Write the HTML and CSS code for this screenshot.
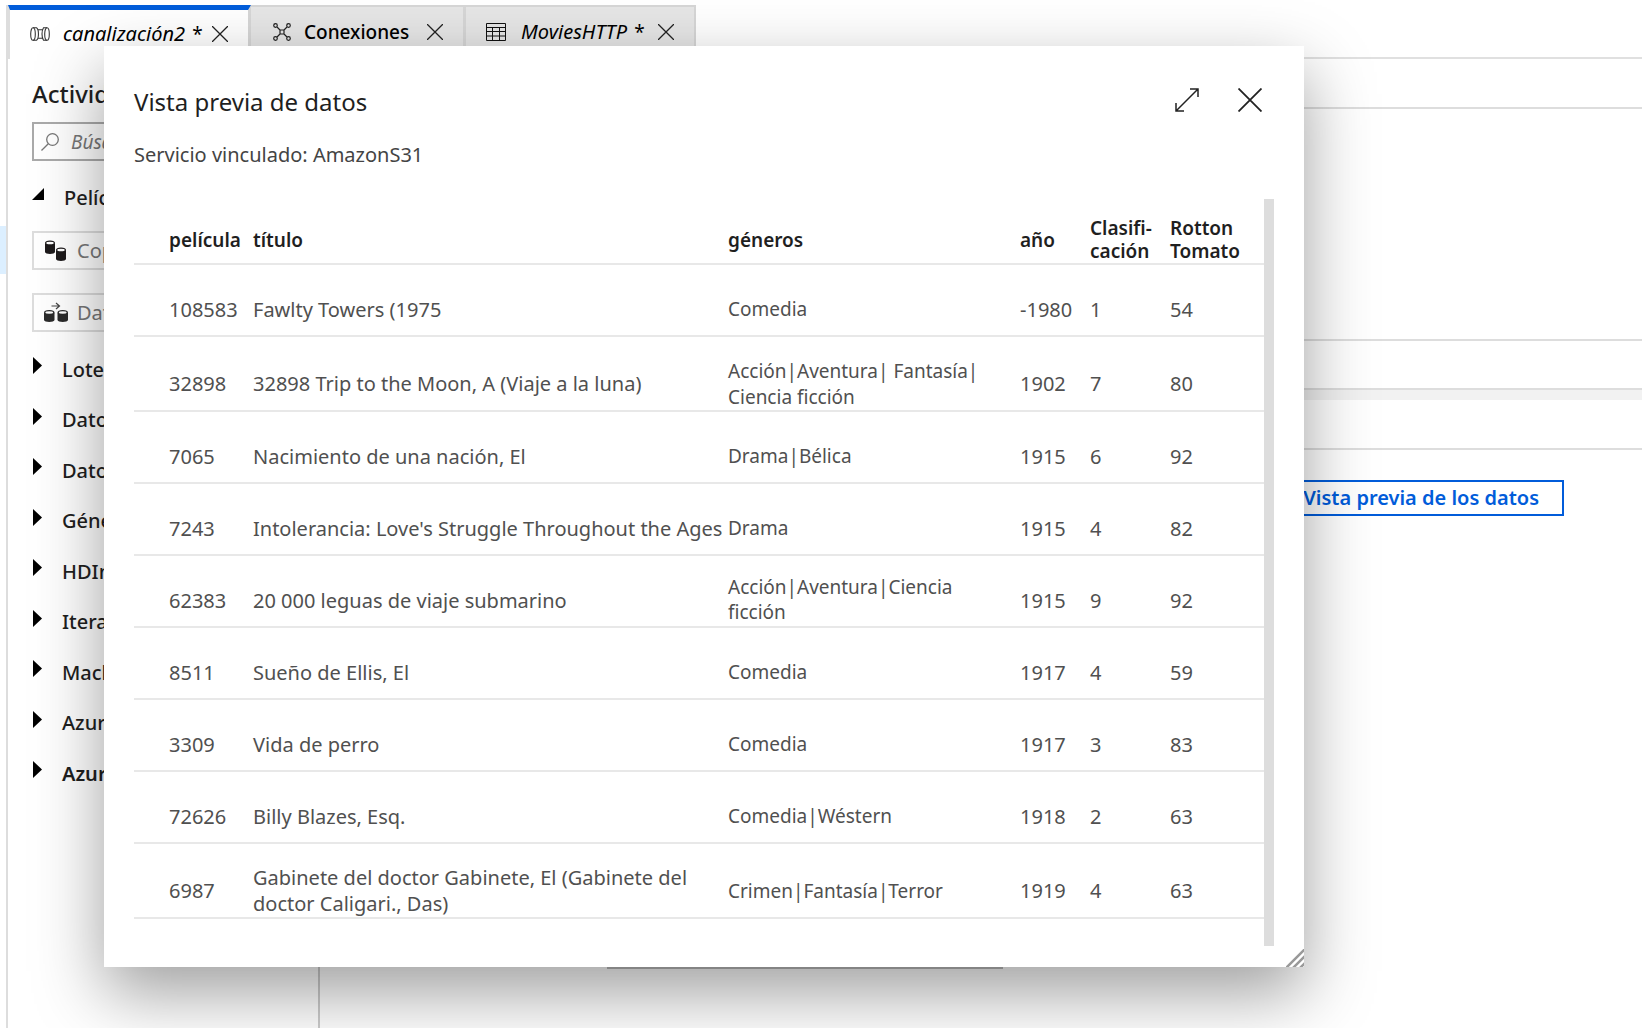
FILE: index.html
```html
<!DOCTYPE html>
<html lang="es">
<head>
<meta charset="utf-8">
<title>Vista previa de datos</title>
<link rel="stylesheet" href="styles.css">
</head>
<body>
<div class="app">
  <nav class="rail"><a class="rail-item" href="#" aria-label="Autor"></a></nav>
  <div class="workspace">
    <div class="tabs">
      <div class="tab tab-active">
        <svg class="tab-icon" viewBox="0 0 20 14" fill="none" stroke="#333" stroke-width="1.1"><ellipse cx="3" cy="7" rx="2.3" ry="6.3"/><path d="M3 .7h3.500c2.600 1.500 2.600 11.100 0 12.600H3M8 2.800h5M8 11.200h5M17 .7h-3.500c-2 3-2 9.600 0 12.600H17"/><ellipse cx="17" cy="7" rx="2.300" ry="6.300"/></svg>
        <span class="tab-name">canalización2 <span class="star">*</span></span>
        <button class="tab-close" aria-label="Cerrar"><svg viewBox="0 0 16 16"><path d="M0 0 16 16M16 0 0 16"/></svg></button>
      </div>
      <div class="tab">
        <svg class="tab-icon tab-icon-links" viewBox="0 0 18 18" fill="none" stroke="#222" stroke-width="1.200"><path d="M4 4l3.500 3.500M14 4l-3.500 3.500M4 14l3.500-3.500M14 14l-3.500-3.500M7 7h4v4H7z"/><circle cx="2.500" cy="2.500" r="1.800"/><circle cx="15.500" cy="2.500" r="1.800"/><circle cx="2.500" cy="15.500" r="1.800"/><circle cx="15.500" cy="15.500" r="1.800"/></svg>
        <span class="tab-name tab-plain">Conexiones</span>
        <button class="tab-close" aria-label="Cerrar"><svg viewBox="0 0 16 16"><path d="M0 0 16 16M16 0 0 16"/></svg></button>
      </div>
      <div class="tab">
        <svg class="tab-icon tab-icon-table" viewBox="0 0 20 18" fill="none" stroke="#111" stroke-width="1"><path d="M.5.5h19v17H.5zM.5 4.500h19M.5 8.500h19M.5 13h19M6.500 4.500v13M13.500 4.500v13"/></svg>
        <span class="tab-name">MoviesHTTP <span class="star">*</span></span>
        <button class="tab-close" aria-label="Cerrar"><svg viewBox="0 0 16 16"><path d="M0 0 16 16M16 0 0 16"/></svg></button>
      </div>
    </div>
    <div class="columns">
      <aside class="sidebar">
        <h2 class="side-title">Activid</h2>
        <label class="search">
          <svg viewBox="0 0 18 18" fill="none" stroke="#777" stroke-width="1.300"><circle cx="11.500" cy="6.500" r="5.800"/><path d="M7.300 10.700.5 17.500"/></svg>
          <input type="search" placeholder="Búsqueda" aria-label="Búsqueda">
        </label>
        <button class="group group-open"><svg class="caret" viewBox="0 0 12 12"><path d="M12 0v12H0z"/></svg>Películas</button>
        <div class="cards">
          <button class="card">
            <svg viewBox="0 0 24 22"><path fill="#1d1a1b" d="M1 3.500v8.500c0 2.500 10 2.500 10 0V3.500zM12 10.500v8.500c0 2.500 10 2.500 10 0v-8.500z"/><ellipse cx="6" cy="3" rx="5" ry="2.500" fill="#1d1a1b"/><ellipse cx="6" cy="3" rx="3.800" ry="1.300" fill="#fff"/><ellipse cx="17" cy="10" rx="5" ry="2.500" fill="#1d1a1b"/><ellipse cx="17" cy="10" rx="3.800" ry="1.300" fill="#fff"/></svg>
            Copiar
          </button>
          <button class="card">
            <svg viewBox="0 0 24 22"><path fill="#2b2b2b" d="M0 11v7c0 2.500 10.500 2.500 10.500 0v-7zM13.500 11v7c0 2.500 10.500 2.500 10.500 0v-7z"/><ellipse cx="5.250" cy="10.500" rx="5.250" ry="2.500" fill="#2b2b2b"/><ellipse cx="5.250" cy="10.500" rx="3.900" ry="1.200" fill="#fff"/><ellipse cx="18.750" cy="10.500" rx="5.250" ry="2.500" fill="#2b2b2b"/><ellipse cx="18.750" cy="10.500" rx="3.900" ry="1.200" fill="#fff"/><path d="M7.500 4h7.500M12 1l3.500 3L12 7" fill="none" stroke="#444" stroke-width="1.200"/></svg>
            Datos
          </button>
        </div>
        <div class="groups">
          <button class="group"><svg class="caret" viewBox="0 0 9 17"><path d="M0 0l9 8.500L0 17z"/></svg>Lote</button>
          <button class="group"><svg class="caret" viewBox="0 0 9 17"><path d="M0 0l9 8.500L0 17z"/></svg>Datos</button>
          <button class="group"><svg class="caret" viewBox="0 0 9 17"><path d="M0 0l9 8.500L0 17z"/></svg>Datos</button>
          <button class="group"><svg class="caret" viewBox="0 0 9 17"><path d="M0 0l9 8.500L0 17z"/></svg>Género</button>
          <button class="group"><svg class="caret" viewBox="0 0 9 17"><path d="M0 0l9 8.500L0 17z"/></svg>HDInsight</button>
          <button class="group"><svg class="caret" viewBox="0 0 9 17"><path d="M0 0l9 8.500L0 17z"/></svg>Iteración</button>
          <button class="group"><svg class="caret" viewBox="0 0 9 17"><path d="M0 0l9 8.500L0 17z"/></svg>Machine</button>
          <button class="group"><svg class="caret" viewBox="0 0 9 17"><path d="M0 0l9 8.500L0 17z"/></svg>Azure</button>
          <button class="group group-strong"><svg class="caret" viewBox="0 0 9 17"><path d="M0 0l9 8.500L0 17z"/></svg>Azure</button>
        </div>
      </aside>
      <main class="editor">
        <div class="toolbar"></div>
        <div class="canvas"></div>
        <div class="strip"></div>
        <div class="splitter"></div>
        <div class="strip strip-tabs"></div>
        <div class="settings">
          <button class="preview">Vista previa de los datos</button>
          <div class="field-edge"></div>
        </div>
      </main>
    </div>
  </div>
</div>

<div class="overlay">
  <section class="dialog" role="dialog" aria-labelledby="dialog-title">
    <header class="dialog-head">
      <h1 id="dialog-title">Vista previa de datos</h1>
      <button class="dialog-btn" aria-label="Expandir"><svg viewBox="0 0 24 24" stroke-width="1.500"><path d="M1 23 23 1M15 1h8v8M1 15v8h8"/></svg></button>
      <button class="dialog-btn" aria-label="Cerrar"><svg viewBox="0 0 24 24" stroke-width="1.800"><path d="M.5.5l23 23M23.500.5l-23 23"/></svg></button>
    </header>
    <p class="service">Servicio vinculado: AmazonS31</p>
    <div class="scroll">
      <table class="data">
        <colgroup><col class="c-pad"><col class="c-id"><col class="c-title"><col class="c-genre"><col class="c-year"><col class="c-rank"><col class="c-rotton"></colgroup>
        <thead>
          <tr><td></td><th>película</th><th>título</th><th>géneros</th><th>año</th><th>Clasifi-<br>cación</th><th>Rotton<br>Tomato</th></tr>
        </thead>
        <tbody>
          <tr><td></td><td>108583</td><td>Fawlty Towers (1975</td><td>Comedia</td><td>-1980</td><td>1</td><td>54</td></tr>
          <tr class="tall"><td></td><td>32898</td><td>32898 Trip to the Moon, A (Viaje a la luna)</td><td>Acción|Aventura| Fantasía|<br>Ciencia ficción</td><td>1902</td><td>7</td><td>80</td></tr>
          <tr><td></td><td>7065</td><td>Nacimiento de una nación, El</td><td>Drama|Bélica</td><td>1915</td><td>6</td><td>92</td></tr>
          <tr><td></td><td>7243</td><td>Intolerancia: Love's Struggle Throughout the Ages</td><td>Drama</td><td>1915</td><td>4</td><td>82</td></tr>
          <tr><td></td><td>62383</td><td>20 000 leguas de viaje submarino</td><td>Acción|Aventura|Ciencia<br>ficción</td><td>1915</td><td>9</td><td>92</td></tr>
          <tr><td></td><td>8511</td><td>Sueño de Ellis, El</td><td>Comedia</td><td>1917</td><td>4</td><td>59</td></tr>
          <tr><td></td><td>3309</td><td>Vida de perro</td><td>Comedia</td><td>1917</td><td>3</td><td>83</td></tr>
          <tr><td></td><td>72626</td><td>Billy Blazes, Esq.</td><td>Comedia|Wéstern</td><td>1918</td><td>2</td><td>63</td></tr>
          <tr class="tall"><td></td><td>6987</td><td>Gabinete del doctor Gabinete, El (Gabinete del<br>doctor Caligari., Das)</td><td>Crimen|Fantasía|Terror</td><td>1919</td><td>4</td><td>63</td></tr>
        </tbody>
      </table>
      <div class="scrollbar"></div>
    </div>
    <svg class="grip" viewBox="0 0 18 18" stroke="#999" stroke-width="2.500"><path d="M0 19 19 0M7 19 19 7M14 19l5-5"/></svg>
  </section>
</div>
</body>
</html>
```
FILE: styles.css
```css
* { box-sizing: border-box; }

body {
  margin: 0;
  font: 19px/26px "Noto Sans", "Open Sans", sans-serif;
  color: #1f1f1f;
  background: #fff;
}

button {
  margin: 0;
  padding: 0;
  border: 0;
  background: none;
  font: inherit;
  color: inherit;
  text-align: left;
}

svg { display: block; flex: none; }

.app { display: flex; height: 100vh; overflow: hidden; }

.rail { width: 6px; flex: none; padding-top: 226px; }
.rail-item { display: block; height: 48px; background: #dcefff; }

.workspace {
  flex: 1;
  display: flex;
  flex-direction: column;
  margin-top: 5px;
  border-left: 2px solid #ddd;
}

/* Tabs */
.tabs { display: flex; height: 54px; border-bottom: 2px solid #e0e0e0; }
.tab {
  display: flex;
  align-items: center;
  width: 215px;
  height: 54px;
  padding: 0 20px 2px 22px;
  border-top: 2px solid #d6d6d6;
  border-right: 3px solid #d6d6d6;
  background: #e6e6e6;
  color: #000;
}
.tab:last-child { width: 230px; border-right-width: 2px; padding-left: 20px; }
.tab-active {
  width: 243px;
  padding: 0 20px 2px 20px;
  border-top: 5px solid #015cda;
  border-left: 2px solid #ddd;
  background: #fff;
}
.tab-icon { width: 20px; height: 14px; margin-right: 13px; }
.tab-icon-links { width: 18px; height: 18px; }
.tab-icon-table { height: 18px; margin-right: 15px; }
.tab-name { flex: 1; font-size: 20px; font-style: italic; white-space: nowrap; }
.tab-plain { font-size: 19px; font-style: normal; font-weight: 500; }
.star { margin-left: 2px; font-size: 19px; font-style: normal; }
.tab-close svg { width: 16px; height: 16px; stroke: #222; stroke-width: 1.3; }

/* Activities panel */
.columns { flex: 1; display: flex; min-height: 0; }
.sidebar {
  width: 312px;
  flex: none;
  padding: 19px 24px 0;
  border-right: 2px solid #ccc;
}
.side-title { margin: 0 0 12px; font-size: 24px; line-height: 32px; font-weight: 500; }
.search {
  display: flex;
  align-items: center;
  gap: 12px;
  height: 39px;
  padding-left: 7px;
  border: 2px solid #aaa;
}
.search svg { width: 18px; height: 18px; }
.search input {
  flex: 1;
  min-width: 0;
  padding: 0;
  border: 0;
  outline: 0;
  background: none;
  font: inherit;
  font-style: italic;
}
.search input::placeholder { color: #777; }
.group {
  display: flex;
  align-items: center;
  gap: 20px;
  width: 100%;
  height: 50px;
  padding-left: 1px;
  font-size: 20px;
  font-weight: 500;
}
.group:nth-child(odd) { height: 51px; }
.group-strong { font-weight: 600; }
.caret { width: 9px; height: 17px; margin-bottom: 8px; }
.group.group-open { height: 70px; padding: 3px 0 0; }
.group-open .caret { width: 12px; height: 12px; }
.cards { display: grid; gap: 23px; }
.card {
  display: flex;
  align-items: center;
  gap: 9px;
  height: 39px;
  padding-left: 10px;
  border: 2px solid #ddd;
  color: #777;
  font-size: 20px;
}
.card svg { width: 24px; height: 22px; }
.groups { margin-top: 12px; }

/* Editor */
.editor { flex: 1; display: flex; flex-direction: column; }
.toolbar { height: 50px; border-bottom: 2px solid #ddd; }
.canvas { height: 232px; border-bottom: 2px solid #ddd; }
.strip { height: 49px; border-bottom: 2px solid #ddd; }
.splitter { height: 10px; background: #f2f2f2; }
.strip-tabs { height: 50px; }
.settings {
  flex: 1;
  display: flex;
  flex-direction: column;
  justify-content: space-between;
  padding: 30px 78px 59px 287px;
}
.preview {
  align-self: flex-end;
  padding: 3px 23px;
  height: 36px;
  border: 2px solid #015cda;
  color: #015cda;
  font-size: 20px;
  font-weight: 600;
}
.field-edge { width: 396px; height: 2px; background: #bbb; }

/* Data preview dialog */
.overlay { position: absolute; inset: 0; padding: 46px 338px 61px 104px; overflow: hidden; }
.dialog {
  position: relative;
  padding: 36px 30px 21px;
  background: #fff;
  box-shadow: 0 26px 64px rgba(0, 0, 0, .38);
}
.dialog-head { display: flex; align-items: center; gap: 39px; height: 40px; padding-right: 12px; }
.dialog-head h1 { flex: 1; margin: 0; font-size: 24px; line-height: 32px; font-weight: 400; }
.dialog-btn { padding-bottom: 4px; }
.dialog-btn svg { width: 24px; height: 24px; fill: none; stroke: #222; }
.service { margin: 20px 0 31px; font-size: 20px; color: #444; }
.scroll { display: flex; height: 747px; }
.scrollbar { width: 10px; flex: none; background: #ddd; }
.data {
  flex: 1;
  align-self: flex-start;
  table-layout: fixed;
  border-collapse: separate;
  border-spacing: 0;
  color: #505050;
  font-size: 20px;
  line-height: 25px;
}
.c-pad { width: 33px; }
.c-id { width: 86px; }
.c-title { width: 475px; }
.c-genre { width: 292px; }
.c-year { width: 70px; }
.c-rank { width: 80px; }
.data th, .data td {
  height: 72px;
  padding: 18px 0 0;
  border-bottom: 2px solid #e8e8e8;
  text-align: left;
  white-space: nowrap;
}
.data th:nth-child(2), .data td:nth-child(2) { padding-left: 2px; }
.data td:nth-child(4) { font-size: 19px; }
.data thead th, .data thead td { height: 66px; }
.data thead th { line-height: 23px; font-size: 19px; font-weight: 600; color: #1f1f1f; }
.data .tall td { height: 75px; padding-top: 20px; line-height: 26px; }
.grip { position: absolute; right: 0; bottom: 0; width: 18px; height: 18px; }
```
